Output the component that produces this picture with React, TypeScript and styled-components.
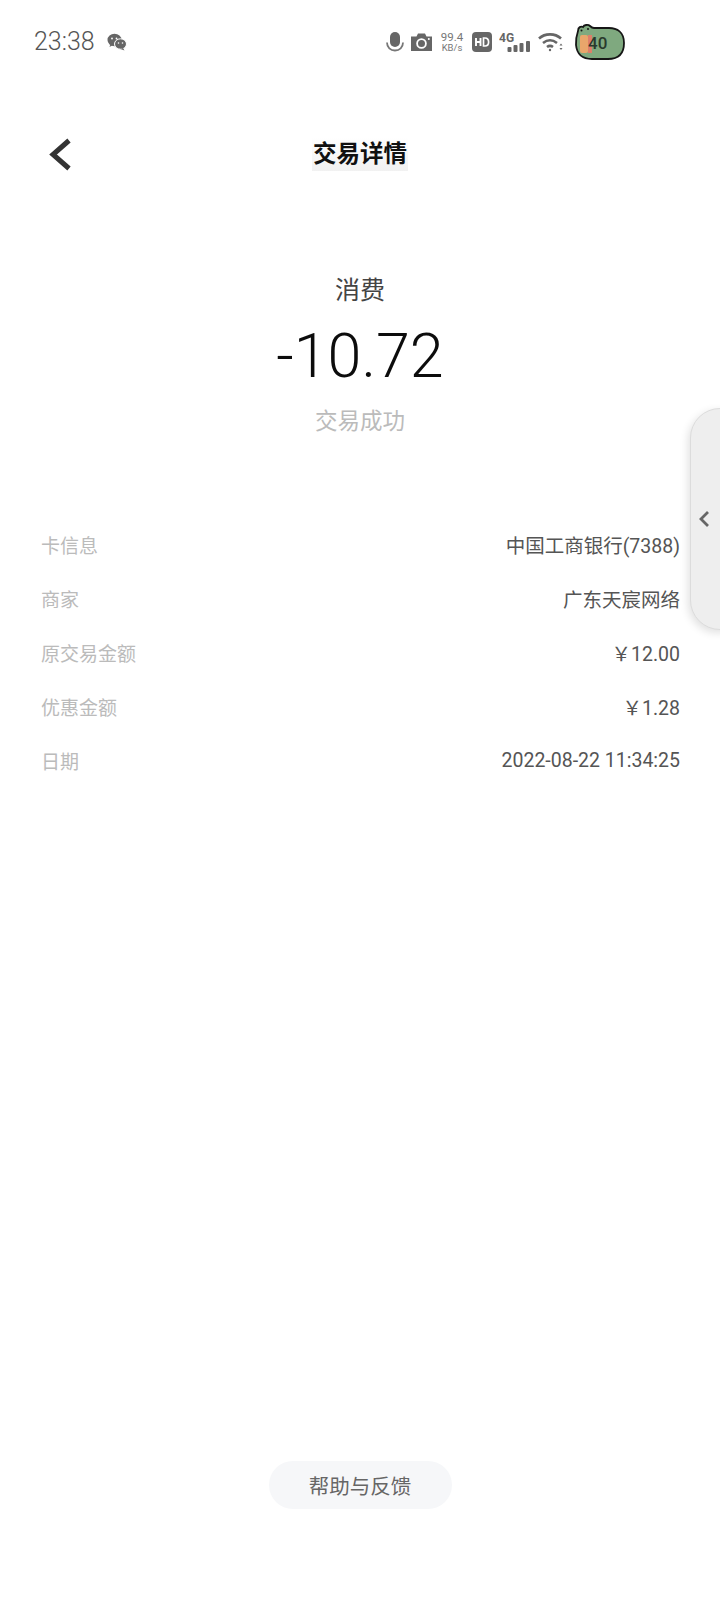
import React from 'react';
import { createGlobalStyle, styled } from 'styled-components';

const GlobalStyle = createGlobalStyle`
  html, body {
    margin: 0;
    padding: 0;
    background: #fff;
    font-family: Roboto, "Noto Sans CJK SC", sans-serif;
  }
`;

const Page = styled.div`
  position: relative;
  display: flex;
  flex-direction: column;
  width: 720px;
  height: 1605px;
  overflow: hidden;
  background: #fff;
`;

const StatusBar = styled.div`
  display: flex;
  align-items: center;
  justify-content: space-between;
  height: 38px;
  margin-top: 23px;
  padding: 0 95px 0 34px;
`;

const StatusLeft = styled.div`
  display: flex;
  align-items: center;
  gap: 12px;
`;

const Clock = styled.span`
  font-size: 25px;
  font-weight: 300;
  color: #555;
  line-height: 38px;
`;

const StatusIcons = styled.div`
  display: flex;
  align-items: center;
  gap: 7px;
`;

const NetSpeed = styled.div`
  display: flex;
  flex-direction: column;
  align-items: center;
  width: 26px;
  color: #777;
  font-size: 11.5px;
  line-height: 11px;
  small {
    font-size: 9.5px;
    line-height: 10px;
  }
`;

const BatteryBadge = styled.div`
  position: relative;
  width: 51px;
  height: 38px;
  margin-left: 3px;
`;

const BatteryText = styled.span`
  position: absolute;
  left: 14px;
  top: 10px;
  font-size: 17px;
  font-weight: 500;
  line-height: 20px;
  color: #2a3a2c;
`;

const Header = styled.div`
  position: relative;
  display: flex;
  align-items: center;
  justify-content: center;
  height: 34px;
  margin-top: 76px;
`;

const BackButton = styled.button`
  position: absolute;
  left: 48px;
  top: 0;
  display: flex;
  padding: 0;
  border: none;
  background: none;
`;

const Title = styled.h1`
  margin: 0;
  padding: 0 1px;
  font-size: 23.5px;
  font-weight: 700;
  line-height: 34px;
  color: #111;
  background: linear-gradient(#fff 0, #f1f1f1 100%);
`;

const Summary = styled.div`
  display: flex;
  flex-direction: column;
  align-items: center;
  margin-top: 102px;
`;

const Kind = styled.div`
  font-size: 25px;
  line-height: 36px;
  color: #444;
`;

const Amount = styled.div`
  margin-top: 11px;
  font-size: 61px;
  font-weight: 300;
  line-height: 72px;
  color: #0c0c0c;
`;

const Status = styled.div`
  margin-top: 12px;
  font-size: 22.5px;
  line-height: 34px;
  color: #bbb;
`;

const DetailList = styled.div`
  display: flex;
  flex-direction: column;
  margin-top: 79px;
  padding: 0 40px 0 41px;
`;

const DetailRow = styled.div`
  display: flex;
  align-items: center;
  justify-content: space-between;
  height: 54px;
`;

const DetailLabel = styled.span`
  font-size: 19px;
  color: #bbb;
`;

const DetailValue = styled.span`
  font-size: 19.5px;
  color: #555;
`;

const Footer = styled.div`
  position: absolute;
  left: 0;
  right: 0;
  bottom: 96px;
  display: flex;
  justify-content: center;
`;

const HelpButton = styled.button`
  width: 183px;
  height: 48px;
  border: none;
  border-radius: 24px;
  background: #f6f7f9;
  color: #666;
  font-family: inherit;
  font-size: 20.5px;
`;

const SideTab = styled.div`
  position: absolute;
  right: -30px;
  top: 408px;
  display: flex;
  align-items: center;
  width: 60px;
  height: 222px;
  padding-left: 7px;
  box-sizing: border-box;
  border: 1px solid #dcdcdc;
  border-radius: 30px;
  background: #eeeeee;
  box-shadow: -2px 3px 8px rgba(0, 0, 0, 0.12);
`;

const details = [
  { label: '卡信息', value: '中国工商银行(7388)' },
  { label: '商家', value: '广东天宸网络' },
  { label: '原交易金额', value: '￥12.00' },
  { label: '优惠金额', value: '￥1.28' },
  { label: '日期', value: '2022-08-22 11:34:25' },
];

const WeChatIcon = () => (
  <svg width="20" height="18" viewBox="0 0 20 18" fill="#666">
    <ellipse cx="7.5" cy="7" rx="7" ry="6.2" />
    <path d="M3.5 11l-1 3 3.5-2z" />
    <ellipse cx="13.5" cy="11" rx="6" ry="5.2" stroke="#fff" strokeWidth="1" />
    <path d="M16 15l1.5 2.5-4-1.5z" />
    <circle cx="5" cy="5.5" r="0.9" fill="#fff" />
    <circle cx="9.5" cy="5.5" r="0.9" fill="#fff" />
    <circle cx="11.5" cy="10" r="0.8" fill="#fff" />
    <circle cx="15.5" cy="10" r="0.8" fill="#fff" />
  </svg>
);

const MicIcon = () => (
  <svg width="18" height="21" viewBox="0 0 18 21">
    <rect x="4" y="0" width="10" height="15" rx="5" fill="#666" />
    <path d="M1 10.5c0 5 3.5 8 8 8s8-3 8-8" fill="none" stroke="#777" strokeWidth="1.8" />
  </svg>
);

const CameraIcon = () => (
  <svg width="21" height="18" viewBox="0 0 21 18">
    <path d="M0 3.5h5.5L7 .5h7l1.5 3H21V18H0z" fill="#666" />
    <circle cx="10.5" cy="10.5" r="4.4" fill="none" stroke="#fff" strokeWidth="1.8" />
    <circle cx="17.8" cy="6" r="1" fill="#fff" />
  </svg>
);

const HdIcon = () => (
  <svg width="20" height="20" viewBox="0 0 20 20">
    <rect width="20" height="20" rx="4" fill="#666" />
    <path d="M4 6v8M4 10h4.5M8.5 6v8" stroke="#fff" strokeWidth="1.9" fill="none" />
    <path d="M11.5 6v8h1.5c2.4 0 3.6-1.6 3.6-4S15.4 6 13 6z" stroke="#fff" strokeWidth="1.7" fill="none" />
  </svg>
);

const SignalIcon = () => (
  <svg width="32" height="20" viewBox="0 0 32 20" fill="#666">
    <text x="0" y="10" fontSize="12" fontWeight="700" fontFamily="Roboto, sans-serif">4G</text>
    <rect x="8.5" y="15" width="4" height="5" rx="1" />
    <rect x="14.5" y="13" width="4" height="7" rx="1" />
    <rect x="20.5" y="11" width="4" height="9" rx="1" />
    <rect x="27" y="9" width="4" height="11" rx="1" />
  </svg>
);

const WifiIcon = () => (
  <svg width="26" height="20" viewBox="0 0 26 20" fill="none" stroke="#666" strokeWidth="2.6">
    <path d="M1 6.5C7 1 17 1 23 6.5" />
    <path d="M5 11c4.500-3.500 9.500-3.500 14 0" />
    <path d="M9 15c2-1.500 4-1.500 6 0" />
    <circle cx="12" cy="18" r="1.2" fill="#666" stroke="none" />
    <path d="M23 11.500v2.500l-2-2M23 14v0" strokeWidth="0" />
    <path d="M21.500 13.500h3l-1.500-2zM21.500 16h3l-1.500 2z" fill="#666" stroke="none" />
  </svg>
);

const FrogBattery = () => (
  <svg width="51" height="38" viewBox="0 0 51 38">
    <path
      d="M4 8c0-4 3-5 5-4 1-2 5-3 7-1 1 1 2 2 4 2h15c8 0 15 4 15 15s-6 16-16 16H18C9 36 3 32 2 22 1.500 16 3 11 4 8z"
      fill="#7fa97f"
      stroke="#161616"
      strokeWidth="1.800"
    />
    <rect x="6" y="12" width="8" height="18" rx="2" fill="#e9a66b" />
    <rect x="14" y="12" width="4" height="18" fill="#de7f6a" />
    <circle cx="7.500" cy="7.500" r="1" fill="#161616" />
    <circle cx="14" cy="6" r="1" fill="#161616" />
  </svg>
);

export default function App() {
  return (
    <Page>
      <GlobalStyle />
      <StatusBar>
        <StatusLeft>
          <Clock>23:38</Clock>
          <WeChatIcon />
        </StatusLeft>
        <StatusIcons>
          <MicIcon />
          <CameraIcon />
          <NetSpeed>
            <span>99.4</span>
            <small>KB/s</small>
          </NetSpeed>
          <HdIcon />
          <SignalIcon />
          <WifiIcon />
          <BatteryBadge>
            <FrogBattery />
            <BatteryText>40</BatteryText>
          </BatteryBadge>
        </StatusIcons>
      </StatusBar>

      <Header>
        <BackButton aria-label="返回">
          <svg width="24" height="34" viewBox="0 0 24 34" fill="none" stroke="#333" strokeWidth="5">
            <path d="M21 3.500L5 17.500l16 14" />
          </svg>
        </BackButton>
        <Title>交易详情</Title>
      </Header>

      <Summary>
        <Kind>消费</Kind>
        <Amount>-10.72</Amount>
        <Status>交易成功</Status>
      </Summary>

      <DetailList>
        {details.map((item) => (
          <DetailRow key={item.label}>
            <DetailLabel>{item.label}</DetailLabel>
            <DetailValue>{item.value}</DetailValue>
          </DetailRow>
        ))}
      </DetailList>

      <SideTab>
        <svg width="12" height="18" viewBox="0 0 12 18" fill="none" stroke="#666" strokeWidth="2.800">
          <path d="M10 2L3 9l7 7" />
        </svg>
      </SideTab>

      <Footer>
        <HelpButton>帮助与反馈</HelpButton>
      </Footer>
    </Page>
  );
}
